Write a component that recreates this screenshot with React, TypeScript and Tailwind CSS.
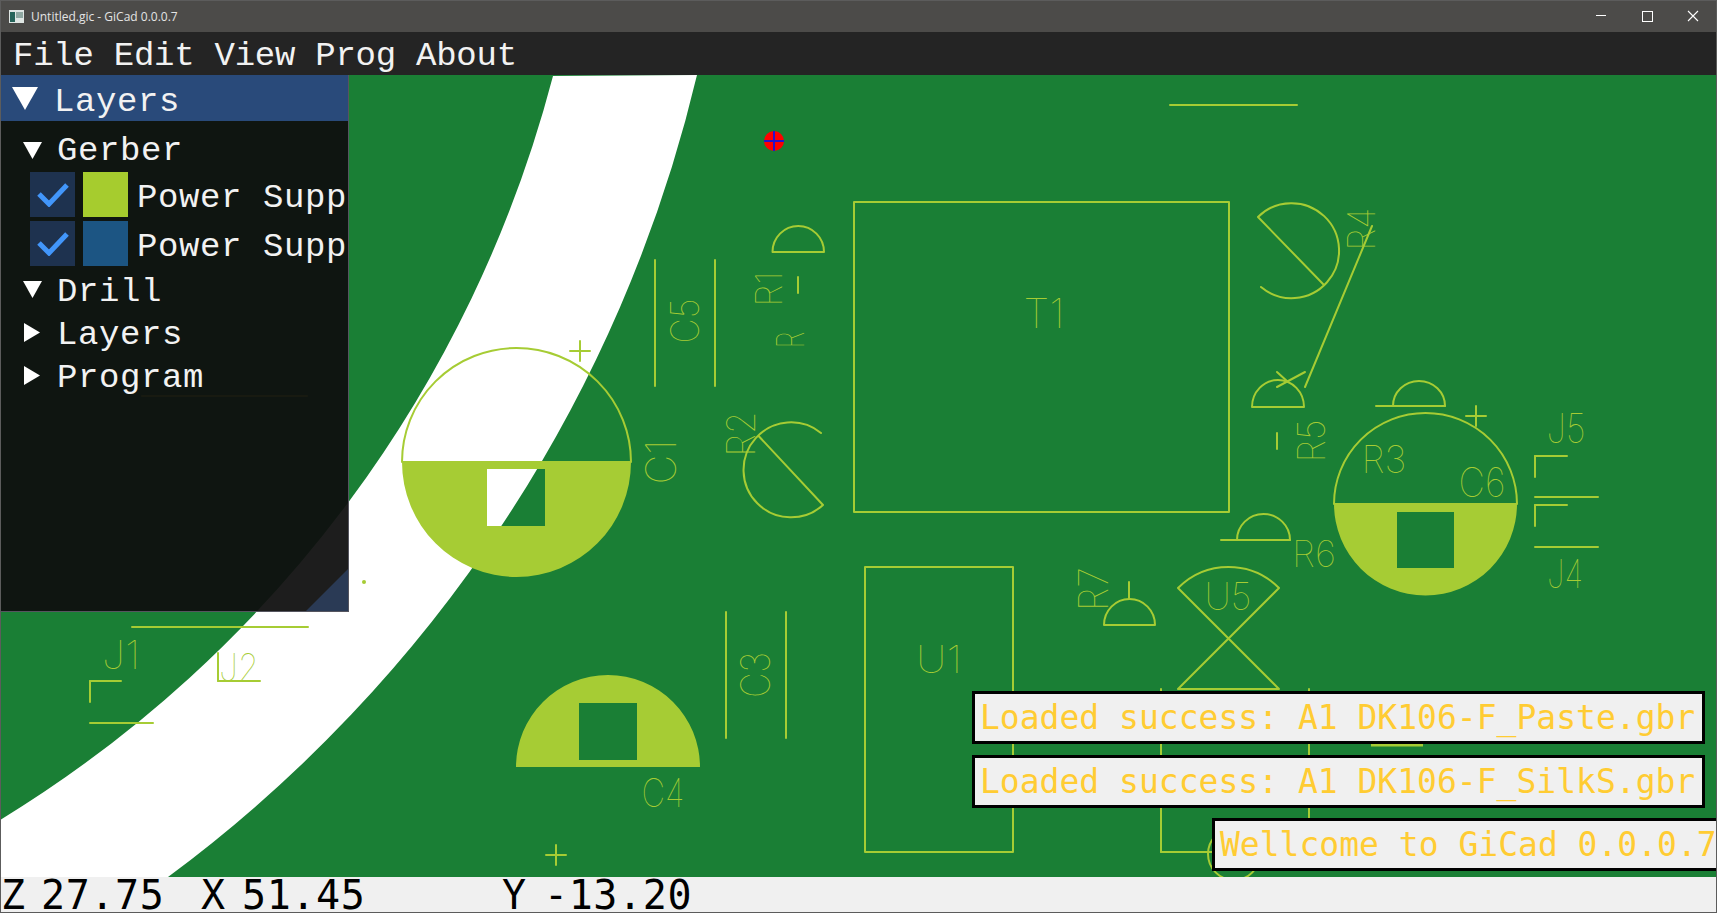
import React from 'react';

const SILK = '#a6cc34';
const GREEN = '#1a7f35';

// straight tracks, page coordinates: x1 y1 x2 y2
const tracks = [
  [1170, 105, 1297, 105],
  [132, 627, 308, 627],
  [142, 396, 307, 396],
  [655, 260, 655, 386],
  [715, 260, 715, 386],
  [726, 612, 726, 738],
  [786, 612, 786, 738],
  [90, 681, 121, 681],
  [90, 681, 90, 702],
  [90, 723, 153, 723],
  [218, 653, 218, 681],
  [218, 681, 260, 681],
  [1535, 456, 1567, 456],
  [1535, 456, 1535, 477],
  [1535, 497, 1598, 497],
  [1535, 505, 1567, 505],
  [1535, 505, 1535, 526],
  [1535, 547, 1598, 547],
  [1305, 387, 1372, 226],
  [1277, 387, 1305, 372],
  [1277, 372, 1288, 382],
  [798, 277, 798, 293],
  [1277, 433, 1277, 449],
  [1376, 406, 1445, 406],
  [1221, 540, 1290, 540],
  [1129, 582, 1129, 599],
  [1161, 689, 1161, 852],
  [1309, 689, 1309, 852],
  [1161, 852, 1215, 852],
];

// plus marks, centre x y
const pluses = [
  [580, 351],
  [556, 855],
  [1476, 416],
];

// silkscreen labels: text, centre x, centre y, cap height, length, rotation
const labels: [string, number, number, number, number, number][] = [
  ['T1', 1044, 313, 30, 41, 0],
  ['U1', 939, 659, 28, 46, 0],
  ['U5', 1228, 596, 28, 47, 0],
  ['R3', 1384, 459, 28, 45, 0],
  ['C6', 1482, 482, 30, 47, 0],
  ['J5', 1566, 428, 30, 39, 0],
  ['J4', 1565, 573, 29, 36, 0],
  ['R6', 1314, 553, 27, 44, 0],
  ['J1', 121, 654, 29, 38, 0],
  ['J2', 239, 667, 28, 40, 0],
  ['C4', 663, 792, 29, 43, 0],
  ['C1', 660, 462, 31, 45, -90],
  ['C5', 684, 321, 29, 45, -90],
  ['C3', 755, 675, 30, 46, -90],
  ['R', 790, 340, 28, 17, -90],
  ['R1', 768, 289, 27, 35, -90],
  ['R2', 740, 434, 29, 45, -90],
  ['R4', 1361, 229, 28, 43, -90],
  ['R5', 1311, 441, 28, 43, -90],
  ['R7', 1093, 589, 30, 44, -90],
];

function Board() {
  return (
    <svg className="absolute inset-0" width={1715} height={802} viewBox="1 75 1715 802">
      <rect x={1} y={75} width={1715} height={802} fill={GREEN} />
      {/* board outline */}
      <path d="M697 75 A1400 1400 0 0 1 168 877 L0 877 L0 820 A1238 1238 0 0 0 553 76 Z" fill="#fff" />

      {/* pads */}
      <path
        fillRule="evenodd"
        fill={SILK}
        d="M402 462 A114.5 115 0 0 0 631 462 Z M487 469 V526 H545 V469 Z"
      />
      <path
        fillRule="evenodd"
        fill={SILK}
        d="M516 767 A92 92 0 0 1 700 767 Z M579 703 V760 H637 V703 Z"
      />
      <path
        fillRule="evenodd"
        fill={SILK}
        d="M1334 504 A91.5 91.5 0 0 0 1517 504 Z M1397 512 V568 H1454 V512 Z"
      />

      <g fill="none" stroke={SILK} strokeWidth={2} strokeLinecap="round" strokeLinejoin="round">
        <path d="M402 462 A114.5 114 0 0 1 631 462 Z" />
        <path d="M1334 504 A91.5 91 0 0 1 1517 504 Z" />
        <rect x={854} y={202} width={375} height={310} />
        <rect x={865} y={567} width={148} height={285} />
        <path d="M772.5 252 A25.7 26 0 0 1 824 252 Z" />
        <path d="M1252 407 A26 27 0 0 1 1304 407 Z" />
        <path d="M1393 406 A26 25 0 0 1 1445 406" />
        <path d="M1237 540 A26.5 26 0 0 1 1290 540" />
        <path d="M1104 625 A25.5 26 0 0 1 1155 625 Z" />
        <path d="M821 433 A47.5 47.5 0 1 0 823 505 L758.6 436" />
        <path d="M1261 287 A47.5 47.5 0 1 0 1258 217 L1324 285" />
        <path d="M1178 588 A71 71 0 0 1 1279 588 L1178 689 H1279 L1178 588" />
        <circle cx={1234} cy={854} r={26} />
        {tracks.map((t, i) => (
          <line key={i} x1={t[0]} y1={t[1]} x2={t[2]} y2={t[3]} />
        ))}
        {pluses.map((p, i) => (
          <path key={i} d={`M${p[0] - 10} ${p[1]} H${p[0] + 10} M${p[0]} ${p[1] - 10} V${p[1] + 10}`} />
        ))}
      </g>
      <line x1={1371} y1={745} x2={1423} y2={745} stroke={SILK} strokeWidth={3} />
      <circle cx={364} cy={582} r={2} fill={SILK} />

      {labels.map(([text, cx, cy, cap, len, rot]) => (
        <text
          key={text}
          transform={`translate(${cx} ${cy}) rotate(${rot})`}
          y={cap / 2}
          textAnchor="middle"
          textLength={len}
          lengthAdjust="spacingAndGlyphs"
          fontSize={cap / 0.727}
          fontWeight={100}
          fontFamily="Inter, sans-serif"
          fill={SILK}
        >
          {text}
        </text>
      ))}

      {/* cursor marker */}
      <ellipse cx={774} cy={141} rx={10} ry={10} fill="#ff0000" />
      <path d="M764 141 H784 M774 131 V151" stroke="#2a12c8" strokeWidth={2} />
    </svg>
  );
}

function Caret({ open, big }: { open: boolean; big?: boolean }) {
  if (big) {
    return (
      <svg width={26} height={23} viewBox="0 0 26 23" className="shrink-0">
        <path d="M0 0 H26 L13 23 Z" fill="#fff" />
      </svg>
    );
  }
  return open ? (
    <svg width={19} height={17} viewBox="0 0 19 17" className="shrink-0">
      <path d="M0 0 H19 L9.5 17 Z" fill="#fff" />
    </svg>
  ) : (
    <svg width={19} height={19} viewBox="0 0 19 19" className="shrink-0">
      <path d="M1 0 L17 9.5 L1 19 Z" fill="#fff" />
    </svg>
  );
}

function TreeRow({ label, open, className = '', textClass = '' }: { label: string; open: boolean; className?: string; textClass?: string }) {
  return (
    <div className={`flex items-center h-[43px] pl-[22px] gap-[15px] ${className}`}>
      <Caret open={open} />
      <span className={textClass}>{label}</span>
    </div>
  );
}

function LayerRow({ color }: { color: string }) {
  return (
    <div className="flex items-center h-[45px] pl-[29px]">
      <div className="w-[45px] h-[45px] bg-[#1e324f] flex items-center justify-center">
        <svg width={32} height={24} viewBox="0 0 32 24">
          <path d="M2 11 L12 21 L30 2" fill="none" stroke="#4296fa" strokeWidth={5} />
        </svg>
      </div>
      <div className="w-[45px] h-[45px] ml-[8px]" style={{ backgroundColor: color }} />
      <span className="ml-[9px] pt-[6px] whitespace-pre">Power Supp</span>
    </div>
  );
}

function LayersPanel() {
  return (
    <div className="absolute left-0 top-0 w-[348px] h-[537px] bg-[#0f0f0f]/[0.94] border-r border-b border-[#55555f] text-[#f2f2f2] text-[34px] leading-none tracking-[0.6px] font-['Liberation_Mono',monospace] overflow-hidden">
      <div className="flex items-center h-[46px] bg-[#294a7a] pl-[11px] gap-[16px]">
        <Caret open big />
        <span className="pt-[7px]">Layers</span>
      </div>
      <div className="pt-[8px]">
        <TreeRow label="Gerber" open />
        <div className="flex flex-col gap-[4px]">
          <LayerRow color="#a6cc2e" />
          <LayerRow color="#1c5583" />
        </div>
        <TreeRow label="Drill" open className="mt-[2px]" textClass="pt-[4px]" />
        <TreeRow label="Layers" open={false} textClass="pt-[4px]" />
        <TreeRow label="Program" open={false} textClass="pt-[5px]" />
      </div>
      {/* resize grip */}
      <svg width={42} height={42} viewBox="0 0 42 42" className="absolute right-0 bottom-0">
        <path d="M42 0 V42 H0 Z" fill="#2a3a55" />
      </svg>
    </div>
  );
}

function Toast({ text, className = '' }: { text: string; className?: string }) {
  return (
    <div
      className={`h-[53px] shrink-0 flex items-center px-[5px] bg-[#f0f0f0] border-[3px] border-black text-[#ffcc33] text-[33px] leading-none whitespace-pre font-['DejaVu_Sans_Mono',monospace] ${className}`}
    >
      {text}
    </div>
  );
}

function TitleBar() {
  return (
    <div className="h-[31px] shrink-0 flex items-center bg-[#4c4b49] text-[#e4e4e4] text-[12px] font-['Open_Sans',sans-serif]">
      <svg width={15} height={13} viewBox="0 0 15 13" className="ml-[8px]">
        <rect width={15} height={13} fill="#dfe6e4" />
        <rect x={1} y={2} width={5} height={10} fill="#26645a" />
        <rect x={7} y={2} width={7} height={6} fill="#8fa8a2" />
      </svg>
      <span className="ml-[7px]">Untitled.gic - GiCad 0.0.0.7</span>
      <div className="ml-auto flex items-center">
        <svg width={46} height={31} viewBox="0 0 46 31">
          <path d="M18 14.5 H28" stroke="#fff" strokeWidth={1} />
        </svg>
        <svg width={46} height={31} viewBox="0 0 46 31">
          <rect x={18.5} y={10.5} width={10} height={10} fill="none" stroke="#fff" strokeWidth={1} />
        </svg>
        <svg width={46} height={31} viewBox="0 0 46 31">
          <path d="M18 10 L28 20 M28 10 L18 20" stroke="#fff" strokeWidth={1.1} />
        </svg>
      </div>
    </div>
  );
}

export default function App() {
  return (
    <div className="w-[1717px] h-[913px] flex flex-col border border-[#5c5c5c] overflow-hidden bg-[#f0f0f0]">
      <TitleBar />
      <div className="h-[43px] shrink-0 flex items-center pl-[12px] pt-[4px] bg-[#242424] text-[#f2f2f2] text-[34px] leading-none tracking-[-0.25px] whitespace-pre font-['Liberation_Mono',monospace]">
        File Edit View Prog About
      </div>

      <div className="relative flex-1 overflow-hidden">
        <Board />
        <LayersPanel />
        <div className="absolute left-[971px] top-[616px] w-[733px] flex flex-col gap-[10.5px]">
          <Toast text="Loaded success: A1 DK106-F_Paste.gbr" />
          <Toast text="Loaded success: A1 DK106-F_SilkS.gbr" />
          <Toast text="Wellcome to GiCad 0.0.0.7" className="ml-[240px] w-[520px]" />
        </div>
      </div>

      <div className="h-[34px] shrink-0 flex items-center bg-[#f0f0f0] text-black text-[40px] leading-[34px] tracking-[0.6px] whitespace-pre font-['DejaVu_Sans_Mono',monospace]">
        <span className="w-[40px]">Z</span>
        <span className="w-[160px]">27.75</span>
        <span className="w-[41px]">X</span>
        <span className="w-[260px]">51.45</span>
        <span className="w-[42px]">Y</span>
        <span>-13.20</span>
      </div>
    </div>
  );
}
